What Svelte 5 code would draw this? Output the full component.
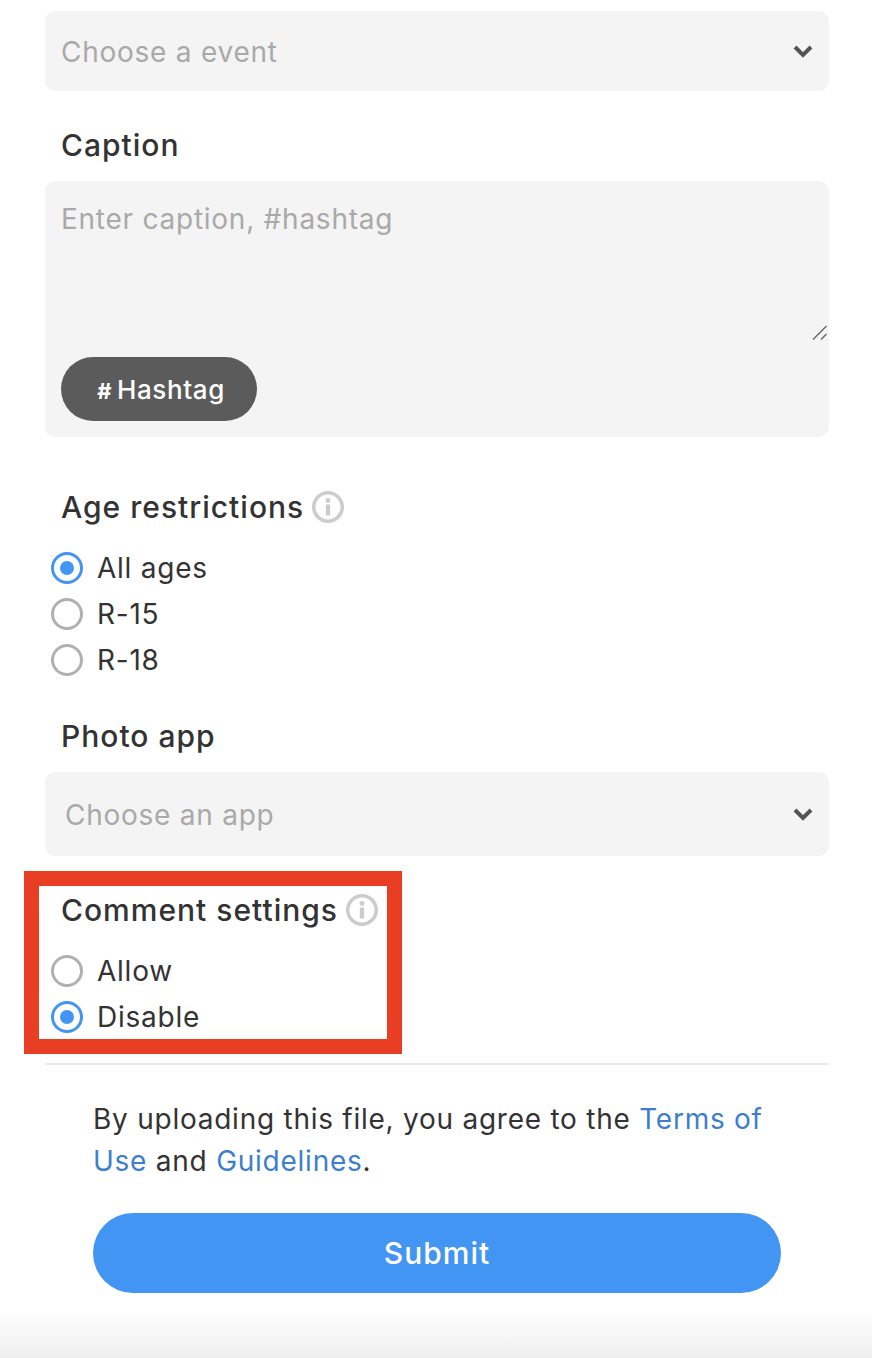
<script lang="ts">
  let age = $state('all');
  let comments = $state('disable');

  const ageOptions = [
    { value: 'all', label: 'All ages' },
    { value: 'r15', label: 'R-15' },
    { value: 'r18', label: 'R-18' },
  ];
  const commentOptions = [
    { value: 'allow', label: 'Allow' },
    { value: 'disable', label: 'Disable' },
  ];
</script>

{#snippet chevron()}
  <svg class="chevron" width="20" height="14" viewBox="0 0 20 14" aria-hidden="true">
    <path d="M2 3 L10 11 L18 3" fill="none" stroke="#555" stroke-width="4" />
  </svg>
{/snippet}

{#snippet info()}
  <svg class="info" width="32" height="32" viewBox="0 0 32 32" aria-hidden="true">
    <circle cx="16" cy="16" r="14.25" fill="none" stroke="#cccccc" stroke-width="3.5" />
    <circle cx="16" cy="9.5" r="2.4" fill="#cccccc" />
    <rect x="13.8" y="13.5" width="4.4" height="11" rx="0.5" fill="#cccccc" />
  </svg>
{/snippet}

{#snippet radio(name: string, value: string, label: string, checked: boolean, pick: (v: string) => void)}
  <label class="radio">
    <input type="radio" {name} {value} {checked} onchange={() => pick(value)} />
    <span class="dot" class:on={checked}></span>
    <span class="radio-text">{label}</span>
  </label>
{/snippet}

<main class="page">
  <div class="select select-event">
    <span>Choose a event</span>
    {@render chevron()}
  </div>

  <h3 class="label label-caption">Caption</h3>
  <div class="caption-box">
    <div class="placeholder">Enter caption, #hashtag</div>
    <svg class="grip" width="16" height="16" viewBox="0 0 16 16" aria-hidden="true">
      <path d="M1 14.5 L14.5 1 M9 14.5 L14.5 9" stroke="#666" stroke-width="1.4" fill="none" />
    </svg>
    <button type="button" class="tag"><span class="hash">#</span>Hashtag</button>
  </div>

  <h3 class="label label-age">Age restrictions {@render info()}</h3>
  <div class="radios">
    {#each ageOptions as o}
      {@render radio('age', o.value, o.label, age === o.value, (v) => (age = v))}
    {/each}
  </div>

  <h3 class="label label-app">Photo app</h3>
  <div class="select select-app">
    <span>Choose an app</span>
    {@render chevron()}
  </div>

  <section class="comments">
    <div class="highlight"></div>
    <h3 class="label">Comment settings {@render info()}</h3>
    <div class="radios">
      {#each commentOptions as o}
        {@render radio('comments', o.value, o.label, comments === o.value, (v) => (comments = v))}
      {/each}
    </div>
  </section>

  <hr />

  <p class="agree">
    By uploading this file, you agree to the <a href="#terms">Terms of Use</a> and <a href="#guidelines">Guidelines</a>.
  </p>

  <button type="button" class="submit">Submit</button>

  <div class="fade"></div>
</main>

<style>
  :global(body) {
    margin: 0;
    background: #fff;
  }

  .page {
    box-sizing: border-box;
    width: 872px;
    height: 1358px;
    padding-top: 11px;
    overflow: hidden;
    font-family: Inter, "Liberation Sans", sans-serif;
    letter-spacing: 0.75px;
    color: #333;
  }

  .select {
    display: flex;
    align-items: center;
    justify-content: space-between;
    margin: 0 43px 0 45px;
    background: #f4f4f4;
    border-radius: 10px;
    font-size: 28px;
    color: #a9a9a9;
  }

  .select span {
    padding-top: 2px;
  }

  .select-event {
    height: 80px;
    padding: 0 16px;
  }

  .select-app {
    height: 84px;
    margin-top: 16px;
    padding: 0 16px 0 20px;
  }

  .chevron {
    display: block;
  }

  .label {
    display: flex;
    align-items: center;
    gap: 8px;
    margin: 0 0 0 61px;
    font-size: 30px;
    line-height: 40px;
    font-weight: 550;
    letter-spacing: 1px;
    color: #333;
  }

  .label-caption {
    margin-top: 34px;
  }

  .label-age {
    margin-top: 50px;
  }

  .label-app {
    margin-top: 33px;
  }

  .caption-box {
    position: relative;
    box-sizing: border-box;
    height: 256px;
    margin: 16px 43px 0 45px;
    padding: 20px 16px 16px;
    background: #f4f4f4;
    border-radius: 10px;
  }

  .placeholder {
    height: 156px;
    font-size: 28px;
    line-height: 36px;
    color: #a9a9a9;
  }

  .grip {
    position: absolute;
    top: 144px;
    right: 1px;
  }

  .tag {
    display: block;
    width: 196px;
    height: 64px;
    padding: 0 0 0 4px;
    border: none;
    border-radius: 32px;
    background: #5b5b5b;
    color: #fff;
    font: 550 26px Inter, "Liberation Sans", sans-serif;
    letter-spacing: 0.6px;
  }

  .hash {
    margin-right: 5px;
    font-size: 22px;
    font-weight: 700;
  }

  .radios {
    display: flex;
    flex-direction: column;
    margin-top: 18px;
  }

  .radio {
    display: flex;
    align-items: center;
    gap: 14px;
    height: 46px;
    padding-left: 51px;
    font-size: 28px;
    color: #333;
  }

  .radio-text {
    padding-bottom: 1px;
  }

  .radio input {
    position: absolute;
    opacity: 0;
    width: 0;
    height: 0;
  }

  .dot {
    box-sizing: border-box;
    display: flex;
    align-items: center;
    justify-content: center;
    width: 32px;
    height: 32px;
    border: 3px solid #b0b0b0;
    border-radius: 50%;
    background: #fff;
  }

  .dot.on {
    border-color: #4295f3;
  }

  .dot.on::after {
    content: '';
    width: 14px;
    height: 14px;
    border-radius: 50%;
    background: #4295f3;
  }

  .comments {
    position: relative;
    margin-top: 34px;
  }

  .highlight {
    position: absolute;
    left: 24px;
    top: -19px;
    box-sizing: border-box;
    width: 378px;
    height: 183px;
    border: 15px solid #e83e23;
    pointer-events: none;
  }

  hr {
    height: 2px;
    margin: 23px 43px 0 45px;
    border: none;
    background: #e8e8e8;
  }

  .agree {
    margin: 33px 93px 0;
    font-size: 28px;
    line-height: 42px;
    color: #333;
  }

  .agree a {
    color: #3d7fcc;
    text-decoration: none;
  }

  .submit {
    display: block;
    width: 688px;
    height: 80px;
    margin: 31px 0 0 93px;
    border: none;
    border-radius: 40px;
    background: #4295f3;
    color: #fff;
    font: 550 30px Inter, "Liberation Sans", sans-serif;
    letter-spacing: 1px;
  }

  .fade {
    height: 48px;
    margin-top: 17px;
    background: linear-gradient(to bottom, #fff, #eeeeee);
  }
</style>
